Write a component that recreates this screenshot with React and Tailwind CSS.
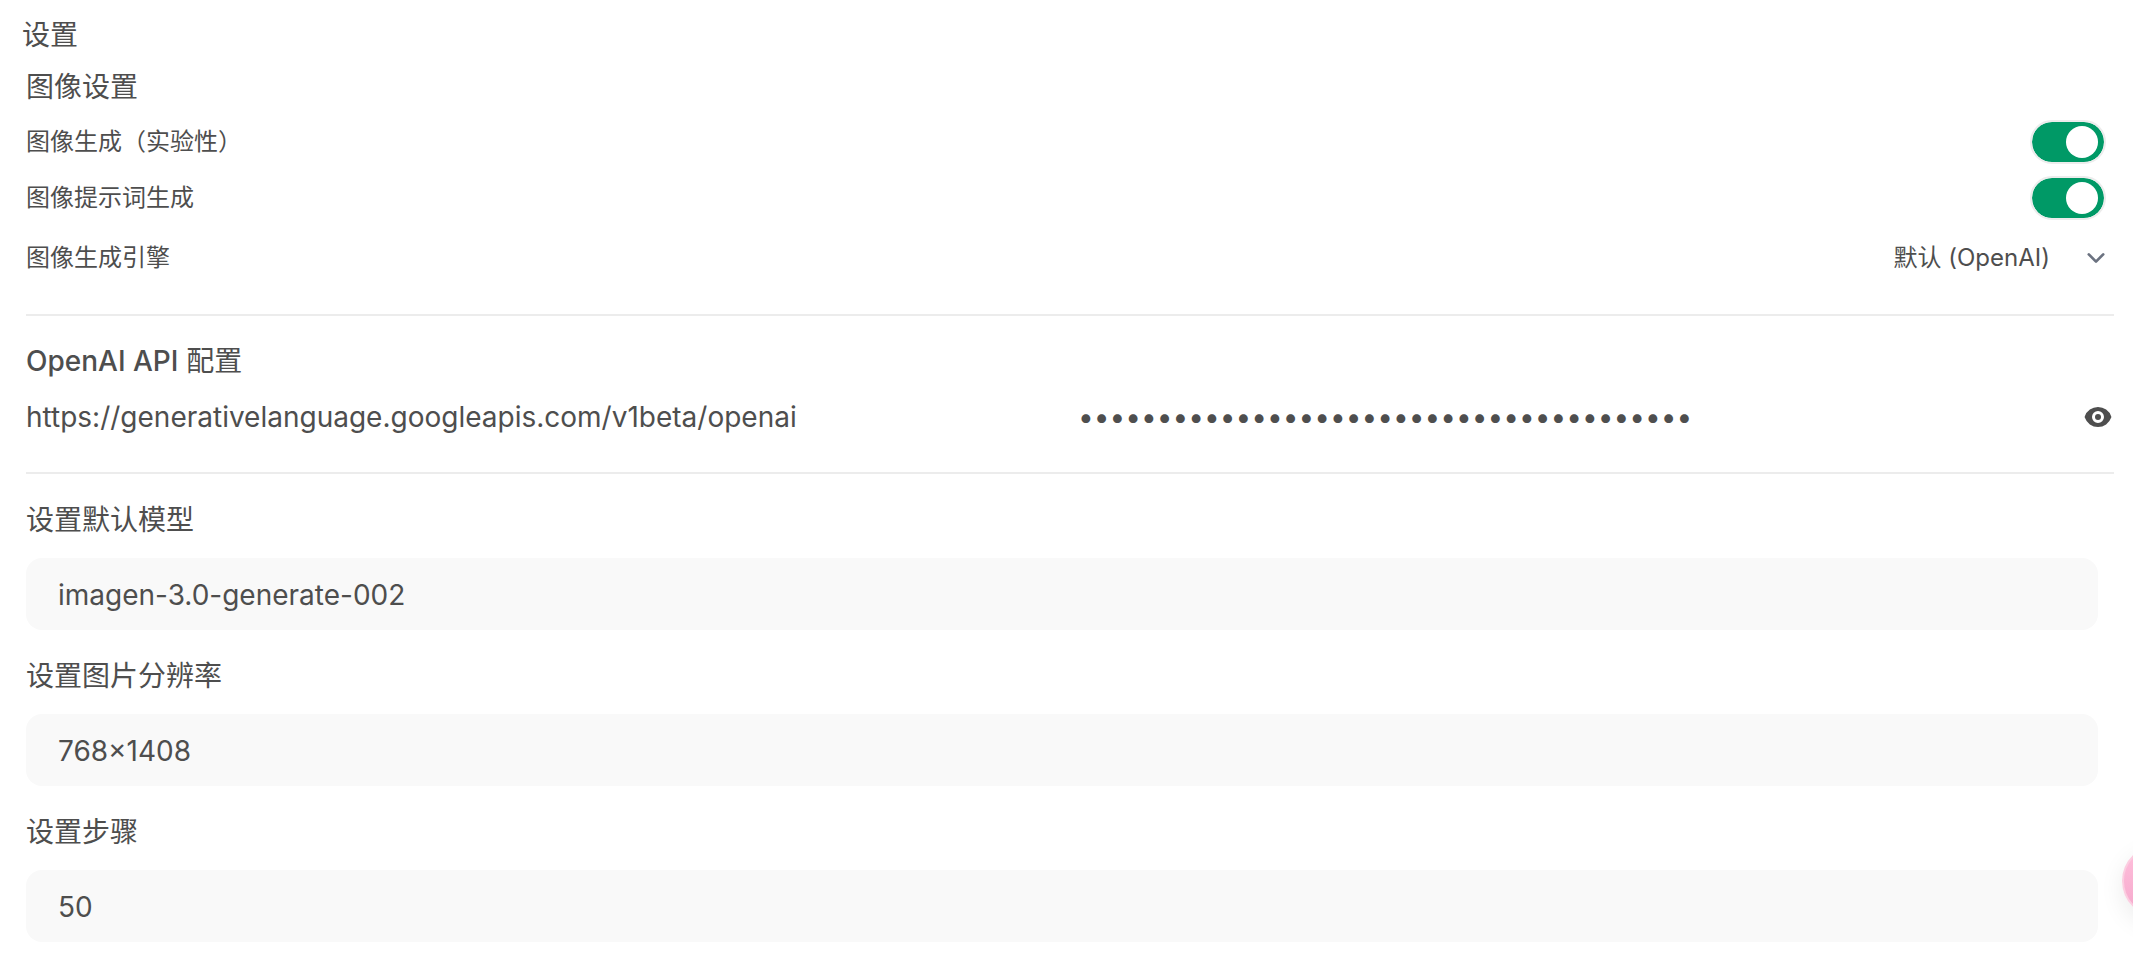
import { useState } from "react";

const ENGINES = [
  { value: "openai", label: "默认 (OpenAI)" },
  { value: "comfyui", label: "ComfyUI" },
  { value: "automatic1111", label: "Automatic1111" },
];

function Switch({ id, checked, onChange }) {
  return (
    <span className="flex w-[72px] h-10 mr-[10px]">
      <input
        id={id}
        type="checkbox"
        role="switch"
        checked={checked}
        onChange={(e) => onChange(e.target.checked)}
        className="peer sr-only"
      />
      <label
        htmlFor={id}
        className="flex w-full items-center rounded-full bg-gray-200 px-[6px] outline-2 outline-[#ececec] cursor-pointer peer-checked:justify-end peer-checked:bg-emerald-600"
      >
        <span className="size-8 rounded-full bg-white" />
      </label>
    </span>
  );
}

function Field({ id, label, value, onChange }) {
  return (
    <div>
      <label htmlFor={id} className="block text-[28px] leading-10">
        {label}
      </label>
      <input
        id={id}
        type="text"
        value={value}
        onChange={(e) => onChange(e.target.value)}
        className="mt-[18px] block h-[72px] w-full rounded-2xl bg-[#f9f9f9] px-8 pt-[2px] text-[28px] leading-10 outline-none"
      />
    </div>
  );
}

export default function App() {
  const [enabled, setEnabled] = useState(true);
  const [promptEnabled, setPromptEnabled] = useState(true);
  const [engine, setEngine] = useState("openai");
  const [url, setUrl] = useState("https://generativelanguage.googleapis.com/v1beta/openai");
  const [apiKey, setApiKey] = useState("AIzaSy000000000000000000000000000000000");
  const [showKey, setShowKey] = useState(false);
  const [model, setModel] = useState("imagen-3.0-generate-002");
  const [size, setSize] = useState("768×1408");
  const [steps, setSteps] = useState("50");

  return (
    <div className="relative overflow-hidden bg-white pt-[15px] pb-[29px] font-[Inter,'Noto_Sans_CJK_SC',sans-serif] text-[#4e4e4e]">
      <h1 className="pl-[22px] text-[28px] leading-10">设置</h1>

      <form className="pl-[26px] pr-[19px]" onSubmit={(e) => e.preventDefault()}>
        <h2 className="mt-3 text-[28px] leading-10">图像设置</h2>

        <div className="mt-[7px] flex h-14 items-center justify-between">
          <label htmlFor="enabled" className="text-2xl">图像生成（实验性）</label>
          <Switch id="enabled" checked={enabled} onChange={setEnabled} />
        </div>
        <div className="flex h-14 items-center justify-between">
          <label htmlFor="prompt" className="text-2xl">图像提示词生成</label>
          <Switch id="prompt" checked={promptEnabled} onChange={setPromptEnabled} />
        </div>
        <div className="flex h-16 items-center justify-between">
          <label htmlFor="engine" className="text-2xl">图像生成引擎</label>
          <div className="relative">
            <select
              id="engine"
              value={engine}
              onChange={(e) => setEngine(e.target.value)}
              className="block field-sizing-content appearance-none bg-transparent pr-16 text-2xl outline-none"
            >
              {ENGINES.map((item) => (
                <option key={item.value} value={item.value}>{item.label}</option>
              ))}
            </select>
            <svg
              viewBox="0 0 20 20"
              fill="none"
              className="pointer-events-none absolute inset-y-0 right-0 h-full w-9"
              preserveAspectRatio="xMidYMid slice"
            >
              <path d="M6 8l4 4 4-4" stroke="#6b7280" strokeWidth="1.5" strokeLinecap="round" strokeLinejoin="round" />
            </svg>
          </div>
        </div>

        <hr className="mt-6 border-t-2 border-[#ececec]" />

        <h2 className="mt-[25px] text-[28px] leading-10">
          <span className="font-medium">OpenAI API</span> 配置
        </h2>
        <div className="mt-4 flex h-10 items-center gap-4">
          <input
            type="text"
            aria-label="API Base URL"
            value={url}
            onChange={(e) => setUrl(e.target.value)}
            className="min-w-0 flex-1 bg-transparent text-[28px] leading-10 outline-none"
          />
          <div className="flex min-w-0 flex-1 items-center">
            <input
              type={showKey ? "text" : "password"}
              aria-label="API Key"
              value={apiKey}
              onChange={(e) => setApiKey(e.target.value)}
              className="min-w-0 flex-1 bg-transparent text-[28px] leading-10 outline-none"
            />
            <button type="button" aria-label="显示密钥" onClick={() => setShowKey(!showKey)}>
              <svg viewBox="0 0 16 16" fill="currentColor" className="size-8">
                <path d="M8 9.5a1.5 1.5 0 1 0 0-3 1.5 1.5 0 0 0 0 3Z" />
                <path
                  fillRule="evenodd"
                  clipRule="evenodd"
                  d="M1.38 8.28a.87.87 0 0 1 0-.566 7.003 7.003 0 0 1 13.238.006.87.87 0 0 1 0 .566A7.003 7.003 0 0 1 1.379 8.28ZM11 8a3 3 0 1 1-6 0 3 3 0 0 1 6 0Z"
                />
              </svg>
            </button>
          </div>
        </div>

        <hr className="mt-[35px] border-t-2 border-[#ececec]" />

        <div className="mt-[26px] flex flex-col gap-[26px] pr-4">
          <Field id="model" label="设置默认模型" value={model} onChange={setModel} />
          <Field id="size" label="设置图片分辨率" value={size} onChange={setSize} />
          <Field id="steps" label="设置步骤" value={steps} onChange={setSteps} />
        </div>
      </form>

      {/* floating bubble, mostly off the right edge */}
      <button
        type="button"
        aria-label="助手"
        className="absolute -right-[61px] bottom-[54px] size-[72px] rounded-full border-2 border-[#fbcde0] bg-linear-to-b from-[#ffc0dc] to-[#f5a8cc] shadow-[0_8px_24px_rgba(0,0,0,0.08)]"
      />
    </div>
  );
}
